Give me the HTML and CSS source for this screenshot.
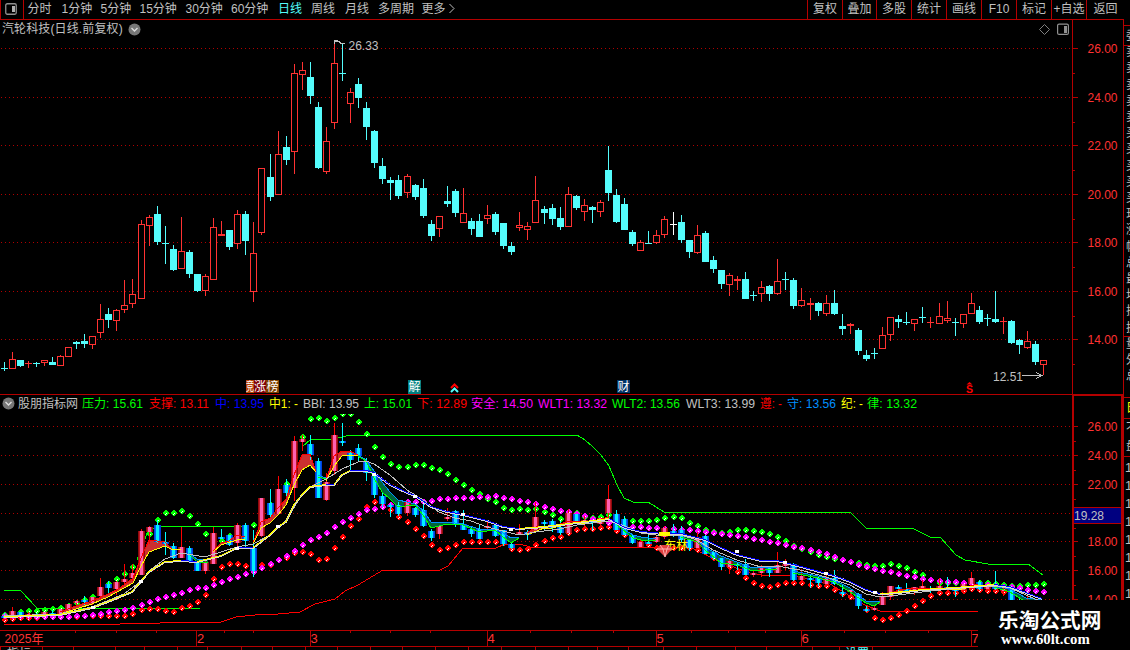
FILE: index.html
```html
<!DOCTYPE html>
<html lang="zh-CN">
<head>
<meta charset="utf-8">
<title>汽轮科技</title>
<link rel="stylesheet" href="styles.css">
</head>
<body>
<div class="app">
  <header class="toolbar">
    <div class="layout-btn"><svg width="12" height="12" viewBox="0 0 12 12"><rect x=".75" y=".75" width="10.5" height="10.5" rx="1.5" fill="none" stroke="#909090" stroke-width="1.3"/><rect x="7" y="3" width="3" height="6" fill="#b0b0b0"/></svg></div>
    <nav class="periods">
      <span>分时</span><span>1分钟</span><span>5分钟</span><span>15分钟</span><span>30分钟</span><span>60分钟</span><span class="active">日线</span><span>周线</span><span>月线</span><span>多周期</span><span>更多</span>
      <svg width="8" height="11" viewBox="0 0 8 11"><path d="M1.5 1 6 5.5 1.5 10" fill="none" stroke="#c0c0c0"/></svg>
    </nav>
    <nav class="tools"><span>复权</span><span>叠加</span><span>多股</span><span>统计</span><span>画线</span><span>F10</span><span>标记</span><span>+自选</span><span>返回</span></nav>
  </header>
  <div class="body">
    <main class="charts">
      <div class="title-row">
        <div class="title"><span class="name">汽轮科技(日线.前复权)</span>
          <svg class="chev" width="13" height="13" viewBox="0 0 13 13"><circle cx="6.5" cy="6.5" r="6" fill="#777"/><path d="M3.5 5 6.5 8 9.5 5" fill="none" stroke="#ddd" stroke-width="1.4"/></svg>
          <svg class="tools-icons" width="34" height="13" viewBox="0 0 34 13"><path d="M6.5 1.5 11.5 6.5 6.5 11.5 1.5 6.5Z" fill="none" stroke="#808080"/><rect x="19.6" y="1.1" width="10.8" height="10.3" rx="1.5" fill="none" stroke="#909090" stroke-width="1.2"/><rect x="26" y="3" width="3" height="7" fill="#909090"/></svg>
        </div>
        <div class="axis-top"></div>
      </div>
      <svg class="upper" id="upper" width="1123" height="356" viewBox="0 38 1123 356"></svg>
      <div class="legend-row">
        <div class="legend">
          <svg class="chev" width="13" height="13" viewBox="0 0 13 13"><circle cx="6.5" cy="6.5" r="6" fill="#777"/><path d="M3.5 5 6.5 8 9.5 5" fill="none" stroke="#ddd" stroke-width="1.4"/></svg>
          <svg id="legend" width="1050" height="18" viewBox="17 396 1050 18"></svg>
        </div>
        <div class="axis-low"></div>
      </div>
      <svg class="lower" id="lower" width="1123" height="216" viewBox="0 414 1123 216"></svg>
      <svg class="dates" id="dates" width="1123" height="20" viewBox="0 630 1123 20"></svg>
    </main>
    <aside><svg id="strip" width="7" height="630" viewBox="1123 20 7 630"></svg></aside>
  </div>
  <div class="brand"><div class="brand-name">乐淘公式网</div><div class="brand-url">www.60lt.com</div></div>
</div>
<script src="chart.js"></script>
</body>
</html>
```
FILE: styles.css
```css
* { box-sizing: border-box; }
body { margin: 0; background: #000; color: #c0c0c0; font: 12px/18px "Liberation Sans", "Noto Sans CJK SC", sans-serif; overflow: hidden; }
svg { display: block; flex: none; }
.app { width: 1130px; height: 650px; position: relative; display: flex; flex-direction: column; overflow: hidden; }
.toolbar { height: 20px; width: 1124px; border-bottom: 1px solid #b40000; display: flex; white-space: nowrap; line-height: 19px; }
.layout-btn { width: 24px; border-left: 1px solid #b40000; border-right: 1px solid #b40000; padding: 3px 0 0 4px; }
.periods { display: grid; grid-template-columns: 34px 39px 39px 46px 45.5px 47px 33px 34px 33px 43.5px 26px 10px; padding-left: 3.5px; }
.periods svg { margin-top: 3px; }
.active { color: #54fcfc; }
.tools { margin-left: auto; display: grid; grid-template-columns: 35px 34px 35px 35px 35px 35px 35px 35px 38px; text-align: center; }
.tools span { border-left: 1px solid #b40000; }
.body { display: flex; }
.charts { width: 1123px; display: flex; flex-direction: column; }
.title-row, .legend-row { display: flex; height: 18px; }
.title { width: 1072px; display: flex; padding-left: 2px; }
.name { font-size: 12px; width: 126px; white-space: nowrap; line-height: 19px; letter-spacing: .12px; }
.title .chev { margin-top: 3px; }
.tools-icons { margin: 3px 0 0 auto; }
.axis-top { flex: 1; border-left: 1px solid #b40000; }
.legend-row { height: 20px; border-top: 1px solid #b40000; }
.legend { width: 1072px; display: flex; padding: 1px 0 0 2px; }
.legend .chev { margin: 1px 2px 0 0; }
.axis-low { flex: 1; border: solid #b40000; border-width: 1px 2px 0 2px; }
text { font-family: "Liberation Sans", "Noto Sans CJK SC", sans-serif; }
.crisp { shape-rendering: crispEdges; }
.price { font-size: 13px; fill: #ff3232; }
.note { font-size: 13px; fill: #c0c0c0; }
.key { font-size: 12px; }
.mark { font-size: 11px; font-weight: bold; fill: #f00; }
.badge { font-size: 12px; fill: #fff; }
.brand { position: absolute; left: 978px; top: 600px; width: 152px; height: 50px; background: #000; color: #fff; white-space: nowrap; }
.brand-name { font: bold 20.7px/24px "Noto Sans CJK SC", sans-serif; padding: 7px 0 0 20px; }
.brand-url { font: bold 14.8px/16px "Liberation Serif", serif; padding-left: 23px; }
```
FILE: chart.js
```js
// open/close body and wick extents on the upper scale: kind, high, top, bottom, low
const raw = `c362,368,368,371 r352,359,369,369 c360,360,366,367 r361,363,363,368 c362,363,363,367 r360,360,363,366 c357,362,365,365 r355,356,366,366 r347,347,357,357 c341,342,344,349
c334,341,344,348 r336,336,345,349 r304,319,333,338 c308,314,320,328 r309,310,321,331 r280,305,310,313 r279,294,304,308 r220,224,299,299 r215,217,226,246 c206,214,242,245
c226,243,243,264 c245,249,270,271 r217,251,269,269 c250,252,274,278 c274,274,291,292 r274,276,291,296 r218,227,280,280 r221,234,236,236 c230,230,247,250 r210,214,244,249
c211,214,241,255 r222,253,292,302 r168,168,233,235 c154,177,197,201 r131,154,195,195 c136,147,160,165 r64,73,152,174 r62,70,75,90 c62,77,96,104 c102,107,168,169
r127,141,172,174 r42,63,123,129 c43,73,73,81 r88,92,104,123 c78,84,98,108 c102,108,127,140 c130,131,163,168 c158,166,179,184 c177,180,183,200 c175,180,196,199
r174,176,193,198 c184,185,197,200 c179,188,216,218 c220,224,236,241 r216,216,229,237 c186,201,204,207 c189,191,213,217 r188,213,223,223 c218,221,229,235 c214,221,237,237
r205,215,219,224 c212,214,232,235 c223,223,246,249 c242,246,252,255 r212,225,228,231 r222,226,230,240 r176,200,223,223 c206,209,213,224 c204,208,219,225 c207,218,227,230
r187,194,227,227 c195,196,208,210 r199,205,212,221 c206,207,210,223 r200,202,212,217 c146,170,193,201 c189,195,222,223 c198,204,230,230 c230,232,244,246 r240,242,251,251
c231,243,243,243 r230,235,243,244 r216,219,235,238 w212,224,224,235 c215,222,240,243 c240,240,252,258 r225,235,253,254 c231,233,262,262 c256,260,269,273 c270,270,284,289
r273,275,285,296 r276,279,281,290 c272,279,299,299 c291,295,295,301 r281,287,294,302 c285,286,294,301 r259,281,294,295 c272,279,279,290 c278,280,306,309 r288,300,306,307
r298,303,305,320 c302,303,311,316 r295,303,314,316 c290,303,314,315 c314,326,329,335 r323,324,326,334 c328,330,351,355 c350,355,359,361 c348,353,353,359 r327,335,349,349
r317,317,335,341 c315,319,322,328 c312,322,322,325 r319,319,324,331 c307,317,317,323 r317,322,322,328 r303,316,324,324 r301,318,321,323 c318,322,322,336 r314,314,324,328
r293,303,314,314 c306,310,322,324 c314,318,318,326 c291,319,322,323 r317,321,321,334 c320,321,343,344 c339,340,345,354 r331,341,348,349 c341,344,362,365 r360,360,365,375`;
const bars = raw.trim().split(/\s+/).map(s => [s[0], ...s.slice(1).split(',').map(Number)]);
const X = i => 4 + 8 * i + Math.floor((i + 0.3) / 16.6);
const rect = (x, y, w, h, f, extra = '') => `<rect x="${x}" y="${y}" width="${w}" height="${h}" fill="${f}" ${extra}/>`;
const text = (x, y, s, cls, w, extra = '') => `<text x="${x}" y="${y}" class="${cls}" ${w ? `textLength="${w}" lengthAdjust="spacingAndGlyphs"` : ''} ${extra}>${s}</text>`;
const AX = '#b40000';
const grid = ys => ys.map(y => { let g = ''; for (let x = 1; x < 1072; x += 4) g += `M${x} ${y}h1v1h-1z`; return `<path d="${g}" fill="#b00000"/>`; }).join('');
const put = (id, s) => { document.getElementById(id).innerHTML = s; };
const pts = s => s.trim().split(/\s+/).map(p => p.split(',').map(Number));
function at(list, x) {
  for (let i = 1; i < list.length; i++) if (x <= list[i][0]) {
    const [a, b] = list[i - 1], [c, d] = list[i];
    return b + (d - b) * (x - a) / (c - a);
  }
  return list[list.length - 1][1];
}
const line = (s, color, w = 1) => `<polyline class="crisp" points="${s}" fill="none" stroke="${color}" stroke-width="${w}"/>`;

// upper candles
let u = '<g class="crisp">' + grid([48, 97, 145, 194, 242, 291, 339]);
bars.forEach(([k, h, t, b, l], i) => {
  const x = X(i), c = k === 'c' ? '#54fcfc' : k === 'w' ? '#fff' : '#ff3232';
  if (k === 'r' && b - t > 2) {
    u += rect(x, h, 1, t - h, c) + rect(x, b, 1, l - b, c) + `<rect x="${x - 2.5}" y="${t + .5}" width="6" height="${b - t - 1}" fill="#000" stroke="${c}"/>`;
  } else u += rect(x, h, 1, l - h, c) + rect(x - 3, t, 7, Math.max(1, b - t), c);
});
u += rect(1072, 38, 1, 356, AX);
[48, 97, 145, 194, 242, 291, 339].forEach(y => { u += rect(1073, y, 5, 1, AX) + rect(1073, y + 25, 2, 1, AX); });
u += '</g>';
[48, 97, 145, 194, 242, 291, 339].forEach((y, i) => { u += text(1087.5, y + 5, (26 - 2 * i) + '.00', 'price', 30); });
u += text(348.5, 50, '26.33', 'note', 30) + text(993, 381, '12.51', 'note', 30);
u += '<path class="crisp" d="M334.5 44V40H338M335 41.5H339L341 43.5H345M1022 375.5H1042M1036 372.5 1042 375.5 1036 378.5" fill="none" stroke="#c0c0c0"/>';
u += rect(246, 380, 8, 13, '#b84408') + text(246, 391, '竞', 'badge', 8) + rect(254, 380, 12, 13, '#800008') + text(254, 391, '涨', 'badge') + rect(266, 380, 13, 13, '#804000') + text(266.5, 391, '榜', 'badge');
u += rect(408, 380, 13, 14, '#008080') + text(408.5, 391, '解', 'badge') + rect(617, 380, 13, 13, '#003468') + text(617.5, 391, '财', 'badge');
u += '<path d="M451 388 454.5 384.5 458 388" fill="none" stroke="#f00" stroke-width="2"/><path d="M451 392 454.5 388.5 458 392" fill="none" stroke="#54fcfc" stroke-width="2"/>';
u += text(966, 392.5, 'S', 'mark', 7) + '<path d="M966.5 384.5 969.5 382 972.5 384.5Z" fill="#f00"/>';
put('upper', u);

// indicator values
const keys = [[18, 60, '股朋指标网', '#c0c0c0'], [82, 61, '压力: 15.61', '#00ff00'], [149, 60, '支撑: 13.11', '#ff0000'], [215, 49, '中: 13.95', '#0000ff'], [269, 29, '中1: -', '#ffff00'], [303, 56, 'BBI: 13.95', '#c0c0c0'], [364, 48, '上: 15.01', '#00ff00'], [417, 50, '下: 12.89', '#ff0000'], [471, 62, '安全: 14.50', '#ff00ff'], [538, 69, 'WLT1: 13.32', '#ff00ff'], [612, 68, 'WLT2: 13.56', '#00ff00'], [686, 69, 'WLT3: 13.99', '#c0c0c0'], [760, 22, '遵: -', '#ff0000'], [787, 49, '守: 13.56', '#0090ff'], [841, 22, '纪: -', '#ffff00'], [867, 50, '律: 13.32', '#00ff00']];
put('legend', keys.map(([x, w, s, c]) => text(x, 407.5, s, 'key', w, `fill="${c}"`)).join(''));

// lower chart
const M = y => Math.round(426.7 + (y - 48.5) * 0.594);
const lowYs = [426, 455, 484, 513, 541, 570, 599];
let s = '<defs><linearGradient id="up"><stop offset="0" stop-color="#780000"/><stop offset=".28" stop-color="#d02030"/><stop offset=".29" stop-color="#ff60b0"/><stop offset=".7" stop-color="#ff60b0"/><stop offset=".72" stop-color="#d02030"/><stop offset="1" stop-color="#780000"/></linearGradient><linearGradient id="dn"><stop offset="0" stop-color="#0030d0"/><stop offset=".28" stop-color="#0070ff"/><stop offset=".29" stop-color="#00f0ff"/><stop offset=".7" stop-color="#00f0ff"/><stop offset=".72" stop-color="#0070ff"/><stop offset="1" stop-color="#0030d0"/></linearGradient><clipPath id="cl"><rect x="0" y="414" width="1072" height="216"/></clipPath></defs><g clip-path="url(#cl)"><g class="crisp">' + grid(lowYs);

const dots = {
  '#00ff00': pts('4,615 20,612 44,610 60,608 76,603 92,597 100,591 108,584 116,579 124,574 132,567 141,550 149,534 157,520 165,513 173,513 181,511 189,516 197,524 205,534 213,538 221,541 229,536 245,530 253,525 261,510 270,505 278,495 286,484 294,455 302,437 310,419 318,418 326,421 334,418 342,414 350,414 358,422 366,434 374,447 382,457 390,464 398,467 407,467 415,465 423,465 431,468 439,470 447,474 455,480 463,485 471,490 479,494 487,499 495,502 503,508 511,510 519,509 527,510 536,509 544,512 552,515 560,519 569,515 577,513 585,518 593,518 601,517 609,515 617,518 625,521 648,521 656,520 664,518 673,517 681,518 689,523 697,526 705,530 721,533 737,530 745,530 761,532 769,534 777,537 785,541 793,546 801,549 810,552 826,557 842,560 866,565 882,566 890,564 898,566 906,568 914,572 922,575 930,580 938,583 986,583 1010,586 1018,586 1043,584'),
  '#ff0000': pts('4,620 20,618 60,617 92,616 124,616 132,614 141,610 149,609 157,609 165,611 173,612 181,608 189,606 197,602 205,595 213,579 221,567 229,564 237,564 245,566 253,569 261,565 270,565 278,560 286,558 294,553 302,552 310,554 318,560 326,559 334,548 342,537 350,526 358,519 366,507 374,502 382,503 390,510 398,517 407,522 415,529 423,536 431,545 439,550 447,548 455,545 463,542 495,542 503,543 511,549 519,550 527,549 536,544 544,541 552,538 560,537 569,533 577,530 609,527 617,531 633,540 641,543 648,545 656,548 689,548 705,552 721,563 729,567 737,572 745,578 753,583 761,586 769,587 785,583 801,583 810,585 826,586 834,590 850,597 858,603 866,610 874,618 882,620 890,618 898,615 906,611 914,606 922,601 930,596 938,593 954,593 970,589 1002,592 1043,603'),
  '#ff00ff': pts('4,616 60,617 92,615 108,612 124,610 132,608 141,605 157,599 173,595 197,588 205,588 213,585 229,579 253,572 261,568 270,564 286,556 302,545 310,540 318,537 326,533 334,527 342,522 350,518 366,510 382,507 398,503 415,502 431,501 439,499 455,498 487,497 495,496 511,499 527,502 544,507 560,511 577,514 593,519 609,523 625,526 648,528 689,530 713,533 745,537 761,540 785,545 810,550 826,554 842,560 866,567 898,574 930,580 962,583 994,586 1018,588 1034,591 1043,592')
};
s += line('4,590 20,590 37,608 65,608 200,608', '#00ff00') + line('137,560 148,531 160,526 245,526', '#00ff00') + line('302,447 310,440 334,439 350,435 577,435 585,440 593,447 601,455 609,466 617,485 624,498 633,502 648,502 664,512 850,512 866,528 912,528 930,537 940,537 956,555 965,560 988,564 1028,564 1043,575', '#00ff00');
s += line('4,624 120,624 121,623 160,623 161,622 221,622 236,617 255,615 278,614 300,612 315,604 335,599 345,591 358,585 383,570 440,570 448,566 463,548 496,548 505,544 520,544 530,547 690,547 720,562 750,573 762,575 790,575 830,584 865,605 880,611 978,611', '#ff0000');

// dotted channels
for (const [c, list] of Object.entries(dots)) bars.forEach((_, i) => {
  const x = X(i), y = Math.round(at(list, x));
  if (c === '#ff0000' && x > 1004) return;
  s += rect(x - 2, y - 1, 6, 2, c) + rect(x - 1, y - 2, 4, 4, c) + rect(x, y - 3, 2, 6, c) + rect(x + 1, y, 1, 1, '#fff') + rect(x, y + 1, 1, 1, '#fff');
});

// trend ribbons: upper edge | lower edge
const ribbons = [
  ['r', '60,612 76,606 92,601 108,594 120,588 133,578 141,558 149,540 165,542 173,550 181,549', '60,614 92,604 108,597 133,583 141,566 149,552 165,546 173,550 181,549'],
  ['g', '189,553 197,559 208,560', '189,554 197,562 208,562'],
  ['r', '213,551 221,543 229,541 237,535 245,537', '213,552 221,545 237,540 245,539'],
  ['r', '253,543 261,522 270,518 278,508 286,499 294,475 302,455 310,454 316,472', '253,544 261,528 270,523 278,515 286,505 294,485 302,470 310,465 316,472'],
  ['g', '318,475 326,478', '318,477 326,479'],
  ['r', '326,480 334,456 342,451 350,451 358,455', '326,481 334,466 342,456 350,455 358,455'],
  ['g', '358,455 366,460 374,471 382,482 390,492 398,500 407,502 415,504 423,510 431,522 447,522 463,524 479,529 495,529 503,533 511,538 519,537', '358,456 366,461 374,478 382,492 390,499 398,507 415,505 423,515 431,528 447,524 463,525 479,532 495,530 503,537 511,543 519,538'],
  ['r', '527,533 536,527 544,526 552,527 569,521 593,521 609,517', '527,535 544,528 552,528 569,524 593,523 609,519'],
  ['g', '617,523 625,530 633,535 641,537 656,539', '617,525 633,538 641,540 656,541'],
  ['g', '681,535 697,540 705,547 721,556 737,562 753,568 777,567', '681,537 697,542 705,550 721,563 737,565 753,571 777,569'],
  ['g', '793,571 818,576 834,580 850,588 866,601 880,602', '793,573 818,578 834,582 850,592 866,603 874,606 880,602'],
  ['r', '890,594 898,590 914,588 930,588 962,588 978,584', '890,595 898,592 930,589 962,589 978,585'],
  ['g', '978,585 994,586 1010,589 1026,598 1042,600', '978,586 994,587 1010,592 1026,602 1042,604']
];
for (const [k, a, b] of ribbons) s += `<polygon points="${a} ${b.split(' ').reverse().join(' ')}" fill="${k === 'r' ? '#cc3030' : '#00663c'}"/>`;
bars.forEach(([k, h, t, b, l], i) => {
  const close = k === 'r' ? t : b, p = bars[i - 1];
  const up = p ? close < (p[0] === 'r' ? p[2] : p[3]) : false, x = X(i);
  s += rect(x, M(h), 1, M(l) - M(h), up ? '#ff0000' : '#00ffff') + rect(x - 3, M(t), 7, Math.max(2, M(b) - M(t)), up ? 'url(#up)' : 'url(#dn)');
});
for (const [k, a, b] of ribbons) s += line(a, k === 'r' ? '#ff0000' : '#0090ff') + line(b, k === 'r' ? '#ffff00' : '#00ff00');
s += '</g>';

// slow averages
s += line('4,616 60,614 92,607 124,594 141,581 149,571 165,559 181,553 205,557 221,552 237,547 253,544 270,535 286,520 302,495 310,487 326,479 342,469 358,462 366,461 374,464 390,475 407,490 423,500 439,512 455,518 471,521 487,527 503,531 519,535 536,532 560,529 577,525 609,521 625,526 641,533 656,535 681,535 697,540 713,550 737,560 761,567 777,566 800,570 826,577 850,585 866,594 880,597 898,595 930,591 962,588 994,586 1010,588 1042,602', '#c0c0c0', 1);
const slow = pts('4,617 60,615 92,608 108,602 132,592 149,572 165,562 181,561 197,562 221,556 237,548 253,548 270,535 278,527 286,522 294,505 302,495 310,487 326,485 334,485 342,475 350,471 366,471 374,473 390,485 407,493 415,496 431,507 447,512 463,515 487,521 503,527 519,529 544,527 577,523 609,519 625,528 641,532 664,534 681,534 705,540 721,548 737,555 761,561 777,561 801,567 834,576 850,582 866,590 880,594 898,593 922,590 954,588 994,585 1010,587 1026,593 1042,599');
s += line(slow.join(' '), '#d8d8d8', 2);
for (let i = 1; i < slow.length; i++) {
  const [a, b] = slow[i - 1], [c, d] = slow[i];
  s += line(`${a},${b - .5} ${c},${d - .5}`, d < b ? '#ffff00' : '#0000ff', 1);
}
[[141, 581], [278, 526], [93, 607], [237, 548], [374, 474], [415, 496], [463, 514], [511, 529], [737, 551], [785, 562], [826, 573], [875, 592]].forEach(([x, y]) => { s += rect(x - 2, y - 1, 4, 3, '#fff'); });

// signal marker
s += rect(659, 532, 11, 4, '#ffff00') + text(664, 550, '布林', 'key', 24, 'fill="#ffff00"');
s += '<path d="M657 549 660 545H669L672 549 665 557Z" fill="#e04040"/><path d="M660 545 663 549 665 557 667 549 669 545M657 549H672" stroke="#ffb0b0" fill="none"/></g>';

s += '<g class="crisp">' + rect(1072, 414, 2, 216, AX) + rect(1121, 414, 2, 216, AX);
lowYs.forEach(y => { s += rect(1074, y, 4, 1, AX) + rect(1074, y + 15, 2, 1, AX); });
s += '</g>';
lowYs.forEach((y, i) => { if (i !== 3) s += text(1087.5, y + 5, (26 - 2 * i) + '.00', 'price', 30); });
s += `<rect x="1073.5" y="507.5" width="48" height="16" fill="#000080" stroke="${AX}"/>` + text(1074, 520, '19.28', 'note', 30);
put('lower', s);

// time axis
let d = '<g class="crisp">' + rect(0, 630, 1123, 1, AX) + rect(0, 646, 1123, 1, AX);
[196, 310, 487, 656, 801, 971].forEach(x => { d += rect(x, 630, 1, 16, AX); });
[75, 116, 156, 224, 253, 350, 390, 430, 530, 571, 613, 691, 728, 765, 844, 885, 928].forEach(x => { d += rect(x, 631, 1, 2, AX); });
[0, 42, 73, 115, 144, 177, 207, 241, 272, 305, 337, 370, 402, 435, 468, 501, 535, 568, 597, 628, 663, 696, 735, 766, 812, 839, 872].forEach(x => { d += rect(x, 647, 1, 3, AX); });
d += '</g>' + text(4.5, 643, '2025年', 'price', 39);
[[197, 2], [310.5, 3], [487.5, 4], [656.5, 5], [801.5, 6], [971.5, 7]].forEach(([x, n]) => { d += text(x, 643, n, 'price'); });
d += text(7, 658, '指标', 'key', 0, 'fill="#c0c0c0"') + text(828, 658, '+', 'key', 0, 'fill="#c0c0c0"') + text(845, 658, '设置', 'key', 0, 'fill="#54fcfc"');
put('dates', d);

// neighbouring quote panel, only its left edge is in view
let q = '<g class="crisp">' + rect(1123, 20, 1, 580, AX);
[25, 45, 336, 397, 418, 456].forEach(y => { q += rect(1124, y, 6, 1, AX); });
q += '</g>';
[...'委卖卖卖卖卖买买买买买现涨幅总最均振换量外总'].forEach((c, i) => {
  const y = 40 + i * 16.2;
  if (y < 400) q += text(1126, y, c, 'key', 0, 'fill="#c0c0c0"');
});
q += text(1126, 412, '日', 'key', 0, 'fill="#ffff00"') + text(1126, 432, '不', 'key', 0, 'fill="#c0c0c0"') + text(1126, 450, '盘', 'key', 0, 'fill="#c0c0c0"');
for (let y = 472; y < 600; y += 18) q += text(1125, y, '1', 'note');
put('strip', q);
```
